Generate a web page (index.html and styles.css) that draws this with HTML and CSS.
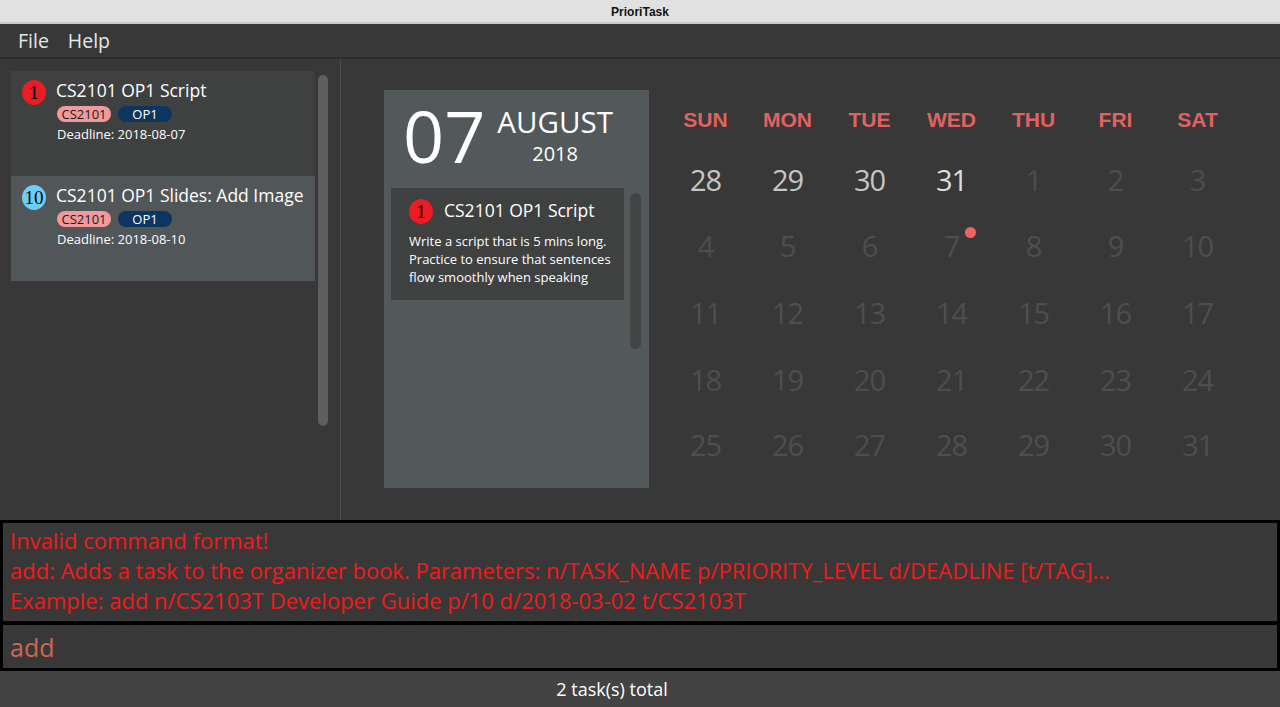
FILE: index.html
```html
<!DOCTYPE html>
<html>
<head>
<meta charset="utf-8">
<title>PrioriTask</title>
<link rel="stylesheet" href="styles.css">
</head>
<body>
<div class="titlebar">PrioriTask</div>
<div class="menubar"><span>File</span><span>Help</span></div>
<div class="main">
  <div class="left">
    <div class="tasklist">
      <div class="card even">
        <div class="prio red">1</div>
        <div class="cardbody">
          <div class="title">CS2101 OP1 Script</div>
          <div class="tags"><span class="tag pink">CS2101</span><span class="tag navy">OP1</span></div>
          <div class="deadline">Deadline: 2018-08-07</div>
        </div>
      </div>
      <div class="card odd">
        <div class="prio blue">10</div>
        <div class="cardbody">
          <div class="title">CS2101 OP1 Slides: Add Image</div>
          <div class="tags"><span class="tag pink">CS2101</span><span class="tag navy">OP1</span></div>
          <div class="deadline">Deadline: 2018-08-10</div>
        </div>
      </div>
    </div>
    <div class="scroll"></div>
  </div>
  <div class="right">
    <div class="datepanel">
      <div class="datehead">
        <div class="day">07</div>
        <div class="monthblock">
          <div class="month">AUGUST</div>
          <div class="year">2018</div>
        </div>
      </div>
      <div class="innerwrap">
        <div class="icard">
          <div class="irow">
            <div class="prio red">1</div>
            <div class="ititle">CS2101 OP1 Script</div>
          </div>
          <div class="desc">Write a script that is 5 mins long.<br>Practice to ensure that sentences<br>flow smoothly when speaking</div>
        </div>
        <div class="iscroll"></div>
      </div>
    </div>
    <div class="calendar">
      <div class="dh">SUN</div><div class="dh">MON</div><div class="dh">TUE</div><div class="dh">WED</div><div class="dh">THU</div><div class="dh">FRI</div><div class="dh">SAT</div>
      <div class="dt prev">28</div><div class="dt prev">29</div><div class="dt prev">30</div><div class="dt prev last">31</div><div class="dt">1</div><div class="dt">2</div><div class="dt">3</div>
      <div class="dt">4</div><div class="dt">5</div><div class="dt">6</div><div class="dt">7<span class="dot"></span></div><div class="dt">8</div><div class="dt">9</div><div class="dt">10</div>
      <div class="dt">11</div><div class="dt">12</div><div class="dt">13</div><div class="dt">14</div><div class="dt">15</div><div class="dt">16</div><div class="dt">17</div>
      <div class="dt">18</div><div class="dt">19</div><div class="dt">20</div><div class="dt">21</div><div class="dt">22</div><div class="dt">23</div><div class="dt">24</div>
      <div class="dt">25</div><div class="dt">26</div><div class="dt">27</div><div class="dt">28</div><div class="dt">29</div><div class="dt">30</div><div class="dt">31</div>
    </div>
  </div>
</div>
<div class="result">
  <div>Invalid command format!</div>
  <div>add: Adds a task to the organizer book. Parameters: n/TASK_NAME p/PRIORITY_LEVEL d/DEADLINE [t/TAG]...</div>
  <div>Example: add n/CS2103T Developer Guide p/10 d/2018-03-02 t/CS2103T</div>
</div>
<div class="command">add</div>
<div class="status">2 task(s) total</div>
</body>
</html>
```
FILE: styles.css
```css
* { box-sizing: border-box; }
html, body { margin: 0; padding: 0; }
body {
  width: 1280px;
  height: 707px;
  overflow: hidden;
  background: #383838;
  font-family: "Open Sans", sans-serif;
  color: #ffffff;
}
.titlebar {
  height: 24px;
  background: #e1e1e1;
  border-bottom: 2px solid #cbcbcb;
  display: flex;
  justify-content: center;
  align-items: center;
  padding-top: 2px;
  font: bold 12px "Liberation Sans", sans-serif;
  color: #111111;
}
.menubar {
  height: 35px;
  background: #383838;
  border-bottom: 2px solid #2c2c2c;
  display: flex;
  align-items: center;
  padding-left: 18px;
  gap: 19px;
  font-size: 19.5px;
  color: #e6e6e6;
}
.main {
  height: 461px;
  display: flex;
}
.left {
  width: 341px;
  border-right: 1px solid #4a4a4a;
  padding: 12px 0 0 11px;
  display: flex;
  align-items: flex-start;
}
.tasklist {
  width: 304px;
  display: flex;
  flex-direction: column;
}
.card {
  height: 105px;
  padding: 7px 0 0 11px;
  display: flex;
  align-items: flex-start;
}
.card.even { background: #3f4040; }
.card.odd { background: #515658; }
.prio {
  width: 24px;
  height: 25px;
  border-radius: 50%;
  margin-top: 2px;
  flex: none;
  display: flex;
  justify-content: center;
  align-items: center;
  font: 19px "Liberation Serif", serif;
  color: #000000;
}
.prio.red { background: #ec1c24; }
.prio.blue { background: #6dcff6; }
.cardbody {
  margin-left: 10px;
  display: flex;
  flex-direction: column;
}
.title {
  font-size: 17.5px;
  line-height: 24px;
  white-space: nowrap;
}
.tags {
  display: flex;
  gap: 7px;
  margin-top: 4px;
  margin-left: 1px;
}
.tag {
  width: 54px;
  height: 16px;
  border-radius: 8px;
  font-size: 13px;
  line-height: 16px;
  text-align: center;
}
.tag.pink { background: #f29a9b; color: #1a1a1a; }
.tag.navy { background: #0c355f; color: #ffffff; }
.deadline {
  margin-top: 3px;
  margin-left: 1px;
  font-size: 13px;
  line-height: 18px;
}
.scroll {
  width: 10px;
  height: 351px;
  margin: 4px 0 0 3px;
  border-radius: 5px;
  background: #5e5e5e;
}
.right {
  flex: 1;
  padding: 31px 0 0 43px;
  display: flex;
  align-items: flex-start;
}
.datepanel {
  width: 265px;
  height: 398px;
  background: #53585b;
  padding-top: 9px;
  flex: none;
}
.datehead {
  display: flex;
  align-items: flex-start;
  padding-left: 19px;
}
.day {
  font-size: 72px;
  line-height: 72px;
}
.monthblock {
  margin: 8px 0 0 12px;
  display: flex;
  flex-direction: column;
  align-items: center;
}
.month {
  font-size: 29.5px;
  line-height: 30px;
}
.year {
  margin-top: 7px;
  font-size: 20px;
  line-height: 20px;
}
.innerwrap {
  display: flex;
  align-items: flex-start;
  margin-top: 17px;
  padding-left: 7px;
}
.icard {
  width: 233px;
  background: #3f4040;
  padding: 10px 0 14px 18px;
}
.irow {
  display: flex;
  align-items: flex-start;
}
.irow .prio { margin-top: 1px; }
.ititle {
  margin-left: 11px;
  font-size: 17.5px;
  line-height: 24px;
  white-space: nowrap;
}
.desc {
  margin-top: 8px;
  font-size: 13px;
  line-height: 18px;
  white-space: nowrap;
}
.iscroll {
  width: 11px;
  height: 156px;
  margin: 5px 0 0 6px;
  border-radius: 6px;
  background: #434545;
}
.calendar {
  margin-left: 15.5px;
  display: grid;
  grid-template-columns: repeat(7, 82px);
  grid-template-rows: 59px 64px 68px 67px 66px 64px;
}
.dh {
  display: flex;
  justify-content: center;
  align-items: center;
  font: bold 21px "Liberation Sans", sans-serif;
  color: #e26262;
}
.dt {
  position: relative;
  display: flex;
  justify-content: center;
  align-items: center;
  padding-bottom: 4px;
  font-size: 29px;
  letter-spacing: -1px;
  color: #4e4e4e;
}
.dt.prev { color: #c6c6c6; }
.dt.last { color: #dedede; }
.dot {
  position: absolute;
  left: calc(50% + 13.5px);
  top: calc(50% - 20.5px);
  width: 11px;
  height: 11px;
  border-radius: 50%;
  background: #f26262;
}
.result {
  height: 103px;
  border: 3px solid #000000;
  border-bottom-width: 2px;
  padding: 2px 0 0 7px;
  font-size: 22px;
  line-height: 30px;
  color: #f01b1b;
  white-space: nowrap;
}
.command {
  height: 48px;
  border: 3px solid #000000;
  border-top-width: 2px;
  padding-left: 7px;
  display: flex;
  align-items: center;
  font-size: 25px;
  color: #d06651;
}
.status {
  height: 36px;
  background: #434343;
  padding-right: 56px;
  text-align: center;
  font-size: 18px;
  line-height: 36px;
  color: #ffffff;
}
```
